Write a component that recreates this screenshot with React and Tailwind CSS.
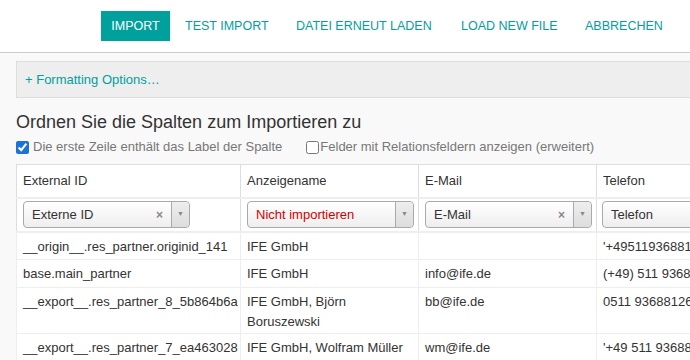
import React from 'react';

const teal = 'text-[#00a09d]';

const SelectBox = ({ value, danger, clearable, wide }) => (
    <div className={`flex h-[27px] items-center rounded-[4px] border border-[#aaaaaa] bg-gradient-to-b from-white to-[#eeeeee] text-[13px] ${wide ? 'w-[180px]' : 'w-[167px]'}`}>
        <span className={`flex-1 pl-[8px] truncate ${danger ? 'text-[#d40000]' : 'text-[#333333]'}`}>{value}</span>
        {clearable && <span className="mr-[8px] text-[12px] font-bold text-[#888888]">×</span>}
        {!wide && (
            <span className="flex h-full w-[18px] items-center justify-center border-l border-[#aaaaaa] bg-gradient-to-b from-[#eeeeee] to-[#dddddd] rounded-r-[4px] text-[7px] text-[#888888]">▼</span>
        )}
    </div>
);

const rows = [
    ['__origin__.res_partner.originid_141', 'IFE GmbH', '', "'+495119368810"],
    ['base.main_partner', 'IFE GmbH', 'info@ife.de', '(+49) 511 93688100'],
    ['__export__.res_partner_8_5b864b6a', 'IFE GmbH, Björn Boruszewski', 'bb@ife.de', '0511 93688126'],
    ['__export__.res_partner_7_ea463028', 'IFE GmbH, Wolfram Müller', 'wm@ife.de', "'+49 511 93688100"],
];

const App = () => {
    return (
        <div className="h-[360px] w-[690px] overflow-hidden bg-[#f9f9f9] font-['Liberation_Sans',Arial,sans-serif]">
            {/* Toolbar */}
            <div className="flex h-[53px] items-center whitespace-nowrap border-b border-[#cccccc] bg-white pl-[101px] text-[12.5px]">
                <button className="h-[30px] w-[69px] shrink-0 bg-[#00a09d] text-white">IMPORT</button>
                <button className={`ml-[4px] h-[30px] w-[111px] shrink-0 px-[11px] text-left ${teal}`}>TEST IMPORT</button>
                <button className={`h-[30px] w-[165px] shrink-0 px-[11px] text-left ${teal}`}>DATEI ERNEUT LADEN</button>
                <button className={`h-[30px] w-[124px] shrink-0 px-[11px] text-left ${teal}`}>LOAD NEW FILE</button>
                <button className={`h-[30px] shrink-0 px-[11px] text-left ${teal}`}>ABBRECHEN</button>
            </div>

            <div className="pl-[16px] pt-[8px]">
                {/* Formatting options */}
                <div className="flex h-[37px] items-center border border-r-0 border-[#dddddd] bg-[#eeeeee] pl-[8px]">
                    <span className={`text-[13px] ${teal}`}>+ Formatting Options…</span>
                </div>

                <h2 className="mt-[13px] text-[18px] leading-[22px] text-[#333333]">Ordnen Sie die Spalten zum Importieren zu</h2>

                <div className="mt-[5px] flex h-[18px] items-center whitespace-nowrap text-[13px] text-[#777777]">
                    <input type="checkbox" defaultChecked className="m-0 h-[13px] w-[13px] accent-[#1a73d9]" />
                    <span className="ml-[4px]">Die erste Zeile enthält das Label der Spalte</span>
                    <input type="checkbox" className="m-0 ml-[24px] h-[13px] w-[13px]" />
                    <span className="ml-[1px]">Felder mit Relationsfeldern anzeigen (erweitert)</span>
                </div>

                {/* Table */}
                <table className="mt-[8px] w-[720px] table-fixed border-collapse bg-white text-[13px] text-[#333333]">
                    <colgroup>
                        <col className="w-[224px]" />
                        <col className="w-[178px]" />
                        <col className="w-[178px]" />
                        <col className="w-[140px]" />
                    </colgroup>
                    <thead>
                        <tr className="h-[33px] border-t border-[#dddddd]">
                            {['External ID', 'Anzeigename', 'E-Mail', 'Telefon'].map((h, i) => (
                                <th key={i} className="border-l border-[#dddddd] px-[6px] text-left font-normal">{h}</th>
                            ))}
                        </tr>
                        <tr className="h-[34px] border-t-2 border-b-2 border-[#eeeeee]">
                            <td className="border-l border-[#dddddd] px-[6px]"><SelectBox value="Externe ID" clearable /></td>
                            <td className="border-l border-[#dddddd] px-[6px]"><SelectBox value="Nicht importieren" danger /></td>
                            <td className="border-l border-[#dddddd] px-[6px]"><SelectBox value="E-Mail" clearable /></td>
                            <td className="border-l border-[#dddddd] px-[5px]"><SelectBox value="Telefon" wide /></td>
                        </tr>
                    </thead>
                    <tbody>
                        {rows.map((r, i) => (
                            <tr key={i} className="h-[28px] border-b border-[#eeeeee]">
                                {r.map((c, j) => (
                                    <td key={j} className="overflow-hidden border-l border-[#eeeeee] px-[6px] pt-[4px] pb-[1px] align-top leading-[20px]">
                                        <span className={j === 3 ? 'whitespace-nowrap' : ''}>{c}</span>
                                    </td>
                                ))}
                            </tr>
                        ))}
                    </tbody>
                </table>
            </div>
        </div>
    );
};

export default App;
